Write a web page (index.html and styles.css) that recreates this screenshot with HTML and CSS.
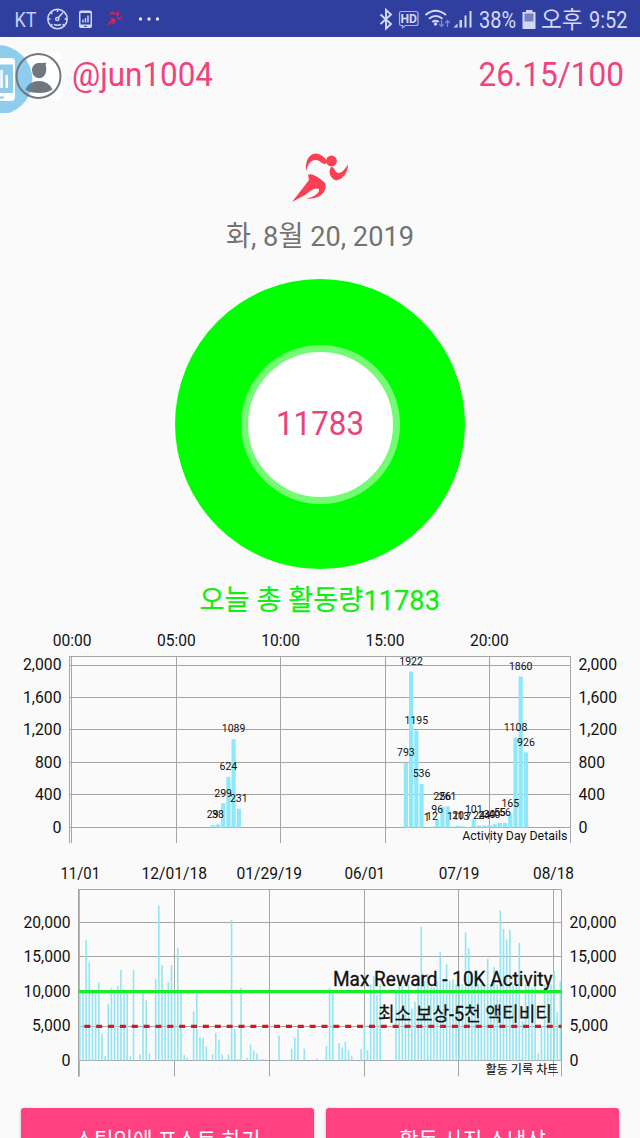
FILE: index.html
```html
<!DOCTYPE html>
<html lang="ko">
<head>
<meta charset="utf-8">
<title>Actifit</title>
<link rel="stylesheet" href="styles.css">
</head>
<body>
<header class="status">
  <svg class="status-icons" width="640" height="37" viewBox="0 0 640 37">
    <text class="carrier" x="14.500" y="26.500" textLength="22" lengthAdjust="spacingAndGlyphs">KT</text>
    <g fill="none" stroke="#d3d8f6" stroke-width="1.500">
      <circle cx="57.500" cy="19" r="9.700"/>
      <path d="M57.500 9.500v2.500M48 19h2.500M64.500 19H67M50.800 12.300l1.600 1.600M50.800 25.700l1.600-1.600M64.200 25.700l-1.600-1.600M54 24.500q3.500 1.500 7 0M58 18l5-5.500"/>
      <circle cx="57.300" cy="19" r="1.600"/>
    </g>
    <rect x="79" y="10.500" width="13" height="17.500" rx="2" fill="#d3d8f6"/>
    <rect x="80.500" y="13" width="10" height="11.500" fill="#303f9f"/>
    <path d="M83 22.500v-3M85.500 22.500v-4.500M88 22.500v-7" stroke="#d3d8f6" stroke-width="1.400"/>
    <path d="M84 26.300h3" stroke="#303f9f"/>
    <g transform="translate(105.500 11.500) scale(.3)" fill="#d92450">
      <path d="M14 17C14 8 18 1 24 1c5 0 9 3 8 6-1 4-7 2-12 2-3 1-5 4-6 8zM16 20c5-1 14 4 18 8 2 5-3 13-18 15l12-11-28 17 20-22z"/>
      <circle cx="40" cy="8" r="6"/><path d="M39 15l6 7c5-1 9-5 12-11-1 9-5 16-12 16-5 0-8-7-6-12z"/>
    </g>
    <g fill="#e6e9fb"><circle cx="140.500" cy="19" r="1.700"/><circle cx="149" cy="19" r="1.700"/><circle cx="157.500" cy="19" r="1.700"/></g>
    <path d="M380.500 14.500l10.500 9.500-5 4.500V10l5 4.500-10.500 9.500" fill="none" stroke="#d3d8f6" stroke-width="1.900"/>
    <path d="M401 11.500h15q2 0 2 2v10q0 2-2 2h-10.500l-3 2.200v-2.200H401q-1.500 0-1.500-2v-10q0-2 1.500-2z" fill="none" stroke="#a9b2e6" stroke-width="1.200"/>
    <text class="hd" x="400.500" y="23" textLength="16.500" lengthAdjust="spacingAndGlyphs">HD</text>
    <g fill="none" stroke="#d3d8f6" stroke-width="2"><path d="M425.500 15q10-8.500 20.500 0M429 18.700q6.700-5.500 13.500 0M432.300 22q3.300-2.500 6.500 0"/></g>
    <circle cx="435.500" cy="24" r="1.700" fill="#d3d8f6"/>
    <path d="M441.500 20v6.500m-2.300-2.500l2.300 2.600 2.300-2.600M447.500 27v-6.500m-2.300 2.500l2.300-2.600 2.300 2.600" fill="none" stroke="#7d88cb" stroke-width="1.300"/>
    <path d="M453.500 27.500l4-4v4zM459.500 20h2.500v7.500h-2.500zM464.500 15.500h2v12h-2zM469.500 11h2v16.500h-2z" fill="#d3d8f6"/>
    <text class="clock" x="479" y="28" textLength="37" lengthAdjust="spacingAndGlyphs">38%</text>
    <path d="M526 10h6.500v2h3v17h-13V12h3.500z" fill="#d3d8f6"/><path d="M524.500 13.500h9v8h-9z" fill="#7680c4"/>
    <text class="clock" x="541" y="28" textLength="41.500" lengthAdjust="spacingAndGlyphs">오후</text>
    <text class="clock" x="589" y="28" textLength="38.500" lengthAdjust="spacingAndGlyphs">9:52</text>
  </svg>
</header>
<main class="screen">
  <section class="account">
    <svg class="avatar" width="64" height="76" viewBox="0 0 64 76">
      <rect x="16" y="16" width="46" height="46" fill="#fff"/>
      <circle cx="-2.500" cy="43" r="35" fill="#8fcdec"/>
      <circle cx="38.500" cy="39" r="22" fill="none" stroke="#70787e" stroke-width="2"/>
      <path d="M25.500 52.500q4-8.500 13.500-8.500t13.500 8.500q-5 3.500-13.500 3.500t-13.500-3.500z" fill="#70787e"/>
      <path d="M32 33.500q0-6.500 6-7.500 4 0 8.500-.5l-1 2q1 2 .7 6.500-1.200 7-7.200 7.200-6.500-.7-7-7.700z" fill="#70787e"/>
      <path d="M25.500 52.500q1.500-3.500 4.500-6l2 4-2.300 4.200q-2.700-.8-4.200-2.200z" fill="#54849e"/>
      <path d="M0 21h11q4 0 4 4v35q0 4-4 4H0z" fill="#fff"/>
      <path d="M0 27.500h13V56H0zM0 59.500h4v2H0z" fill="#8fcbea"/>
      <path d="M1.500 33v18M6.800 38v13" stroke="#fff" stroke-width="2.500"/>
    </svg>
    <svg class="account-text" width="576" height="76" viewBox="64 0 576 76">
      <text x="72" y="49" textLength="141" lengthAdjust="spacingAndGlyphs">@jun1004</text>
      <text x="478.500" y="49" textLength="145.500" lengthAdjust="spacingAndGlyphs">26.15/100</text>
    </svg>
  </section>
  <section class="today">
    <svg width="64" height="54" viewBox="0 0 64 54" class="runner">
      <path d="M18 20.500C17 11 20 4 27 2.500c6 0 11 5 12.500 8-1 4-5 2.500-8-.5-6-3-11 0-13.500 10.500z"/>
      <path d="M20 24c3-3 12 3 17 8 3 6-3 17-19 15.500 7-1 14-5 13-9.500-4-2-9 2-14 6L4 51l14-18 3-4z"/>
      <circle cx="43.500" cy="10" r="5.400"/>
      <path d="M43 16c4-1 3 6 8 6 4-1 6-4 9-8.500 0 8-5 15-12 16-6-2-8-9-5-13.500z"/>
    </svg>
    <svg class="date" width="200" height="36" viewBox="220 0 200 36"><text x="226" y="28" textLength="188" lengthAdjust="spacingAndGlyphs">화, 8월 20, 2019</text></svg>
    <div class="donut"><div class="hole"><svg width="90" height="40" viewBox="0 0 90 40"><text x="1" y="31" textLength="88" lengthAdjust="spacingAndGlyphs">11783</text></svg></div></div>
    <svg class="total" width="250" height="48" viewBox="195 0 250 48"><text x="199.500" y="34" textLength="240.500" lengthAdjust="spacingAndGlyphs">오늘 총 활동량11783</text></svg>
  </section>
  <svg id="day-chart" class="chart" width="640" height="230" viewBox="0 625 640 230"></svg>
  <svg id="history-chart" class="chart" width="640" height="235" viewBox="0 855 640 235"></svg>
  <section class="actions">
    <button class="action">스팀잇에 포스트 하기</button>
    <button class="action">활동 사진 스냅샷</button>
  </section>
</main>
<script src="charts.js"></script>
</body>
</html>
```
FILE: styles.css
```css
* { box-sizing: border-box; }
body {
  margin: 0;
  width: 640px;
  height: 1138px;
  overflow: hidden;
  background: #fafafa;
  font-family: Roboto, "Noto Sans CJK KR", sans-serif;
}
svg { display: block; }
.status { height: 37px; background: #303f9f; }
.carrier { font-size: 21px; fill: #c9cff3; }
.hd { font-size: 12.5px; font-weight: 700; fill: #d3d8f6; }
.clock { font-size: 23.5px; fill: #d3d8f6; }
.screen { display: flex; flex-direction: column; height: 1101px; }
.account { display: flex; height: 76px; flex: none; }
.account-text { font-size: 33px; fill: #f0437c; }
.today { display: flex; flex-direction: column; align-items: center; height: 512px; padding-top: 38px; flex: none; }
.runner { fill: #fb4054; }
.date { margin-top: 13px; font-size: 28.5px; fill: #737373; }
.donut {
  display: flex;
  align-items: center;
  justify-content: center;
  width: 290px;
  height: 290px;
  margin-top: 25px;
  border-radius: 50%;
  background: #0f0;
  flex: none;
}
.hole {
  display: flex;
  align-items: center;
  justify-content: center;
  width: 159px;
  height: 159px;
  border: 7px solid #73fc73;
  border-radius: 50%;
  background: #fff;
}
.hole svg { font-size: 33px; fill: #e8437b; }
.total { margin-top: 7px; font-size: 28.5px; fill: #14ed14; stroke: #14ed14; stroke-width: .25; flex: none; }
.chart { flex: none; }
.grid { stroke: #a6a6a6; stroke-width: 1; }
.bar { fill: #8ce8fa; }
.thin-bar { fill: #93e5f1; }
.axis { font-size: 16.3px; fill: #111; }
.value { font-size: 10.5px; fill: #111; text-anchor: middle; }
.caption { font-size: 13px; fill: #111; }
.small-caption { font-size: 12px; fill: #111; stroke: #111; stroke-width: .15; }
.limit { font-size: 19.5px; fill: #111; stroke: #111; stroke-width: .3; }
.max-line { stroke: #18ed2b; stroke-width: 3.4; }
.min-line { stroke: #d51920; stroke-width: 3.2; stroke-dasharray: 6 5.86; }
.actions { display: flex; gap: 12px; padding: 18px 21px 0; flex: none; }
.action {
  width: 293px;
  height: 60px;
  padding: 0;
  border: 0;
  border-radius: 3px;
  background: #ff4081;
  box-shadow: 0 1px 3px rgba(0, 0, 0, .3);
  color: #fff;
  font: 21.2px Roboto, "Noto Sans CJK KR", sans-serif;
}
```
FILE: charts.js
```js
const NS = 'http://www.w3.org/2000/svg';

function add(parent, tag, attrs, text) {
  const node = document.createElementNS(NS, tag);
  for (const key in attrs) node.setAttribute(key, attrs[key]);
  if (text !== undefined) node.textContent = text;
  parent.appendChild(node);
}

function line(svg, x1, y1, x2, y2, cls = 'grid') {
  add(svg, 'line', { x1, y1, x2, y2, class: cls });
}

function label(svg, x, y, width, text, cls = 'axis') {
  add(svg, 'text', { x, y, textLength: width, lengthAdjust: 'spacingAndGlyphs', class: cls }, text);
}

// Activity of the day, one slot per quarter of an hour.
const day = document.getElementById('day-chart');
const slots = {
  27: 29, 28: 38, 29: 299, 30: 624, 31: 1089, 32: 231,
  64: 793, 65: 1922, 66: 1195, 67: 536, 68: 1, 69: 12, 70: 96, 71: 256, 72: 261,
  73: 11, 74: 20, 75: 13, 76: 7, 77: 101, 78: 24, 79: 24, 80: 30, 81: 40,
  82: 55, 83: 56, 84: 165, 85: 1108, 86: 1860, 87: 926
};
line(day, 69.5, 656.5, 570.5, 656.5);
['2,000', '1,600', '1,200', '800', '400', '0'].forEach((text, i) => {
  const y = 665 + i * 32.46;
  const width = [38.5, 38.5, 38.5, 26.5, 26.5, 9][i];
  line(day, 69.5, Math.floor(y) + .5, 570.5, Math.floor(y) + .5);
  label(day, 61.5 - width, y + 5.3, width, text);
  label(day, 578.5, y + 5.3, width, text);
});
[69.5, 71.5, 176.5, 280.5, 385.5, 489.5, 570.5].forEach(x => line(day, x, 656, x, 843));
['00:00', '05:00', '10:00', '15:00', '20:00'].forEach((text, i) => label(day, 52.7 + i * 104.3, 646, 38.8, text));
for (const i in slots) {
  const h = slots[i] * .08115;
  add(day, 'rect', { x: 69.7 + i * 5.22, y: 827.5 - h, width: 4.2, height: h, class: 'bar' });
}
for (const i in slots) {
  add(day, 'text', { x: 71.8 + i * 5.22, y: 820.8 - slots[i] * .08115, class: 'value' }, slots[i]);
}
label(day, 462.3, 840, 105, 'Activity Day Details', 'caption');

// Daily totals across the recorded period.
const hist = document.getElementById('history-chart');
const totals = [
  10000, 10000, 17400, 14200, 10300, 10000, 11300, 3900, 600, 8200, 10500, 10000, 10800, 13100, 10300,
  10200, 600, 13100, 0, 900, 10000, 8700, 1000, 0, 11800, 22400, 13800, 10000, 11300, 13800,
  10000, 16300, 10000, 800, 400, 0, 7100, 9700, 3400, 3300, 2000, 0, 900, 4000, 3000,
  900, 200, 900, 20300, 4500, 200, 10500, 0, 400, 2300, 1400, 1000, 200, 200, 0,
  0, 0, 0, 3600, 100, 100, 100, 1700, 3300, 4600, 0, 1700, 0, 0, 0,
  300, 100, 0, 2100, 10500, 9900, 0, 2500, 1900, 2700, 1500, 600, 0, 0, 1700,
  5000, 1500, 11000, 12200, 9500, 11000, 0, 0, 0, 0, 10000, 11500, 10800, 10000, 11000,
  7500, 8500, 11000, 19300, 11500, 12500, 10600, 10600, 11500, 15700, 11500, 13900, 11500, 11700, 11000,
  11000, 11000, 18500, 16200, 12500, 13000, 11000, 11000, 10800, 14700, 11000, 13500, 11000, 21700, 19000,
  17500, 18900, 11000, 11000, 17000, 5700, 11000, 11500, 10500, 11000, 1000, 5000, 11000, 10500, 11000,
  13000, 7000, 11500
];
line(hist, 78.5, 889.5, 561.5, 889.5);
['20,000', '15,000', '10,000', '5,000', '0'].forEach((text, i) => {
  const y = 922.3 + i * 34.6;
  const width = [47, 47, 47, 38.5, 9][i];
  line(hist, 78.5, Math.floor(y) + .5, 561.5, Math.floor(y) + .5);
  label(hist, 70.5 - width, y + 5.3, width, text);
  label(hist, 569.5, y + 5.3, width, text);
});
[78.5, 79.3, 174.5, 269.5, 364.5, 458.5, 553.5, 561.5].forEach(x => line(hist, x, 889, x, 1076.5));
[[60.5, 39.5, '11/01'], [141.5, 65.5, '12/01/18'], [236.5, 65.5, '01/29/19'], [344.5, 40.5, '06/01'],
 [438.7, 40.8, '07/19'], [533, 41, '08/18']].forEach(([x, w, text]) => label(hist, x, 879.3, w, text));
totals.forEach((total, i) => {
  const h = total * .00692;
  add(hist, 'rect', { x: 79 + i * 3.162, y: 1060.5 - h, width: 1.6, height: h, class: 'thin-bar' });
});
line(hist, 78.5, 991.6, 561.5, 991.6, 'max-line');
line(hist, 84.3, 1026.3, 561.5, 1026.3, 'min-line');
label(hist, 333, 985.5, 219.5, 'Max Reward - 10K Activity', 'limit');
label(hist, 378, 1020.5, 174, '최소 보상-5천 액티비티', 'limit');
label(hist, 485.5, 1074, 73, '활동 기록 차트', 'small-caption');
```
